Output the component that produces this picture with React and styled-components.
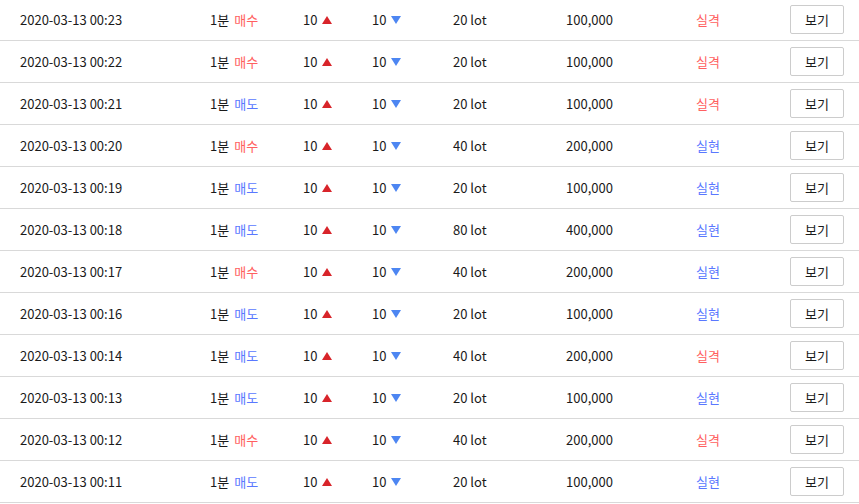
import React from 'react';
import styled, { createGlobalStyle } from 'styled-components';

const GlobalStyle = createGlobalStyle`
    body {
        margin: 0;
        background: #ffffff;
        font-family: "Noto Sans CJK KR", "Noto Sans", sans-serif;
        font-size: 13px;
        color: #1a1a1a;
    }
`;

const List = styled.div`
    margin-top: -1px;
`;

const Row = styled.div`
    display: grid;
    grid-template-columns: 190px 93px 69px 81px 113px 130px 94px 54px 1fr;
    align-items: center;
    height: 41px;
    padding-left: 20px;
    border-bottom: 1px solid #d9d9d9;
`;

const Cell = styled.div`
    white-space: nowrap;
    display: flex;
    align-items: center;
`;

const Side = styled.span`
    margin-left: 5px;
    color: ${p => (p.buy ? '#ff6060' : '#5a78ff')};
`;

const Result = styled.span`
    color: ${p => (p.fail ? '#ff6060' : '#5a78ff')};
`;

const Arrow = styled.svg`
    margin-left: 5px;
    width: 10px;
    height: 8px;
`;

const ViewButton = styled.button`
    width: 54px;
    height: 29px;
    margin-top: -1px;
    padding: 0;
    background: #ffffff;
    border: 1px solid #cccccc;
    border-radius: 2px;
    font-family: inherit;
    font-size: 13px;
    color: #1a1a1a;
`;

const Up = () => (
    <Arrow viewBox="0 0 10 8">
        <polygon points="5,0 10,8 0,8" fill="#d8242a" />
    </Arrow>
);

const Down = () => (
    <Arrow viewBox="0 0 10 8">
        <polygon points="0,0 10,0 5,8" fill="#4d86f2" />
    </Arrow>
);

const rows = [
    ['00:23', true, 20, '100,000', true],
    ['00:22', true, 20, '100,000', true],
    ['00:21', false, 20, '100,000', true],
    ['00:20', true, 40, '200,000', false],
    ['00:19', false, 20, '100,000', false],
    ['00:18', false, 80, '400,000', false],
    ['00:17', true, 40, '200,000', false],
    ['00:16', false, 20, '100,000', false],
    ['00:14', false, 40, '200,000', true],
    ['00:13', false, 20, '100,000', false],
    ['00:12', true, 40, '200,000', true],
    ['00:11', false, 20, '100,000', false],
];

const App = () => {
    return (
        <>
            <GlobalStyle />
            <List>
                {rows.map(([time, buy, lot, amount, fail]) => (
                    <Row key={time}>
                        <Cell>2020-03-13 {time}</Cell>
                        <Cell>
                            1분<Side buy={buy}>{buy ? '매수' : '매도'}</Side>
                        </Cell>
                        <Cell>
                            10<Up />
                        </Cell>
                        <Cell>
                            10<Down />
                        </Cell>
                        <Cell>{lot} lot</Cell>
                        <Cell>{amount}</Cell>
                        <Cell>
                            <Result fail={fail}>{fail ? '실격' : '실현'}</Result>
                        </Cell>
                        <Cell>
                            <ViewButton>보기</ViewButton>
                        </Cell>
                    </Row>
                ))}
            </List>
        </>
    );
};

export default App;
